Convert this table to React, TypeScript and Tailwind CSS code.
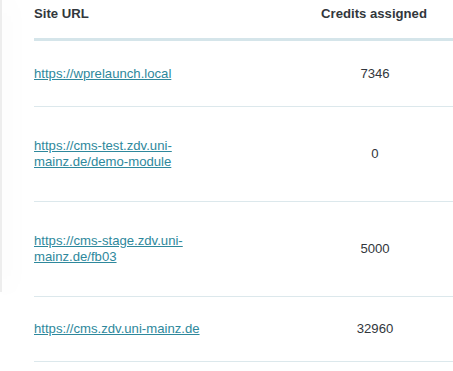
import React from "react";

const rows = [
  { url: "https://wprelaunch.local", credits: "7346", h: "h-[65px]" },
  { url: "https://cms-test.zdv.uni-mainz.de/demo-module", credits: "0", h: "h-[94px]" },
  { url: "https://cms-stage.zdv.uni-mainz.de/fb03", credits: "5000", h: "h-[94px]" },
  { url: "https://cms.zdv.uni-mainz.de", credits: "32960", h: "h-[64px]" },
];

export default function App() {
  return (
    <div
      className="flex w-[453px] h-[371px] bg-white overflow-hidden text-[13.15px] leading-[16px] text-[#32373c]"
      style={{ fontFamily: '"Liberation Sans", Arial, sans-serif' }}
    >
      <div className="w-[2px] h-[292px] shrink-0 bg-[#ededed] shadow-[4px_0_26px_rgba(0,0,0,0.14)]" />
      <div className="flex-1 ml-[32px] flex flex-col">
        <div className="flex h-[41px] border-b-[3px] border-[#d5e5ea] font-bold">
          <div className="flex-1 pt-[6px]">Site URL</div>
          <div className="w-[156px] pt-[6px] text-center pr-[2px]">Credits assigned</div>
        </div>
        {rows.map((r) => (
          <div key={r.url} className={`flex items-center ${r.h} border-b border-[#dce8ec] box-content`}>
            <div className="flex-1">
              <a href="#" className="block max-w-[176px] text-[#2e889c] underline break-words">
                {r.url}
              </a>
            </div>
            <div className="w-[156px] text-center">{r.credits}</div>
          </div>
        ))}
      </div>
    </div>
  );
}
